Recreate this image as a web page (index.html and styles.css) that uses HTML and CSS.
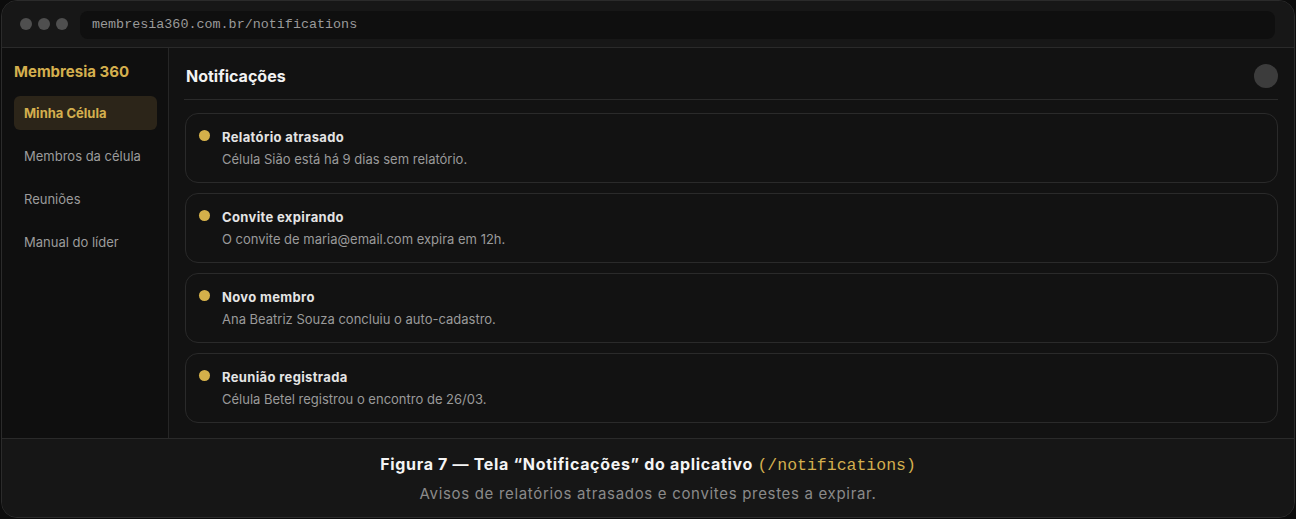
FILE: index.html
```html
<!DOCTYPE html>
<html lang="pt-BR">
<head>
<meta charset="utf-8">
<title>Notificações</title>
<link rel="stylesheet" href="styles.css">
</head>
<body>
<div class="frame">
  <div class="topbar">
    <div class="dots"><span></span><span></span><span></span></div>
    <div class="url">membresia360.com.br/notifications</div>
  </div>
  <div class="app">
    <aside class="sidebar">
      <div class="brand">Membresia 360</div>
      <nav class="nav">
        <div class="nav-item active">Minha Célula</div>
        <div class="nav-item">Membros da célula</div>
        <div class="nav-item">Reuniões</div>
        <div class="nav-item">Manual do líder</div>
      </nav>
    </aside>
    <main class="main">
      <header class="header">
        <h1>Notificações</h1>
        <div class="avatar"></div>
      </header>
      <div class="list">
        <div class="card">
          <span class="dot"></span>
          <div class="card-body">
            <div class="card-title">Relatório atrasado</div>
            <div class="card-desc">Célula Sião está há 9 dias sem relatório.</div>
          </div>
        </div>
        <div class="card">
          <span class="dot"></span>
          <div class="card-body">
            <div class="card-title">Convite expirando</div>
            <div class="card-desc">O convite de maria@email.com expira em 12h.</div>
          </div>
        </div>
        <div class="card">
          <span class="dot"></span>
          <div class="card-body">
            <div class="card-title">Novo membro</div>
            <div class="card-desc">Ana Beatriz Souza concluiu o auto-cadastro.</div>
          </div>
        </div>
        <div class="card">
          <span class="dot"></span>
          <div class="card-body">
            <div class="card-title">Reunião registrada</div>
            <div class="card-desc">Célula Betel registrou o encontro de 26/03.</div>
          </div>
        </div>
      </div>
    </main>
  </div>
  <footer class="caption">
    <div class="caption-title">Figura 7 — Tela “Notificações” do aplicativo <code>(/notifications)</code></div>
    <div class="caption-sub">Avisos de relatórios atrasados e convites prestes a expirar.</div>
  </footer>
</div>
</body>
</html>
```
FILE: styles.css
```css
* { box-sizing: border-box; margin: 0; padding: 0; }
html, body { background: #0c0c0c; }
body {
  font-family: Inter, "Noto Sans", sans-serif;
  width: 1296px;
  height: 519px;
  overflow: hidden;
  padding: 0 1px 1px 1px;
}
.frame {
  width: 1294px;
  height: 518px;
  border: 1px solid #2b2b2b;
  border-radius: 16px;
  background: #161616;
  display: flex;
  flex-direction: column;
  overflow: hidden;
}
.topbar {
  height: 47px;
  flex: none;
  display: flex;
  align-items: center;
  gap: 12px;
  padding: 0 19px 0 18px;
  border-bottom: 1px solid #2a2a2a;
  background: #171717;
}
.dots { display: flex; gap: 6px; }
.dots span {
  width: 12px; height: 12px; border-radius: 50%;
  background: #4f4f4f;
}
.url {
  flex: 1;
  height: 28px;
  margin-top: 1px;
  border-radius: 8px;
  background: #0f0f0f;
  color: #9a9a9a;
  font-family: "Liberation Mono", "DejaVu Sans Mono", monospace;
  font-size: 13.4px;
  line-height: 27px;
  padding-left: 12px;
}
.app {
  flex: none;
  height: 391px;
  display: flex;
  border-bottom: 1px solid #2a2a2a;
}
.sidebar {
  width: 167px;
  flex: none;
  background: #0f0f0f;
  border-right: 1px solid #262626;
  padding: 14px 11px 0 12px;
}
.brand {
  color: #d4af4e;
  font-weight: 700;
  font-size: 15px;
  line-height: 20px;
  margin-bottom: 14px;
}
.nav { display: flex; flex-direction: column; gap: 9px; }
.nav-item {
  height: 34px;
  line-height: 34px;
  padding-left: 10px;
  border-radius: 6px;
  color: #9c9c9c;
  font-size: 13px;
}
.nav-item.active {
  background: #2c2519;
  color: #d4af4e;
  font-weight: 700;
}
.main {
  flex: 1;
  background: #121212;
  padding: 0 16px 0 15px;
  display: flex;
  flex-direction: column;
}
.header {
  height: 52px;
  display: flex;
  align-items: center;
  justify-content: space-between;
  border-bottom: 1px solid #2a2a2a;
  padding: 4px 0 0 2px;
}
.header h1 {
  color: #f2f2f2;
  font-size: 16px;
  font-weight: 700;
}
.avatar {
  width: 24px; height: 24px; border-radius: 50%;
  background: #3c3c3c;
}
.list {
  display: flex;
  flex-direction: column;
  gap: 10px;
  padding: 13px 0 0 1px;
}
.card {
  height: 70px;
  border: 1px solid #2a2a2a;
  border-radius: 13px;
  display: flex;
  align-items: flex-start;
  padding: 15px 16px 0 13px;
  gap: 12px;
}
.dot {
  width: 11px; height: 11px; border-radius: 50%;
  background: #d4b04a;
  flex: none;
  margin-top: 1px;
}
.card-title {
  color: #e4e4e4;
  font-weight: 700;
  font-size: 13px;
  line-height: 16px;
  letter-spacing: 0.35px;
}
.card-desc {
  color: #9a9a9a;
  font-size: 13px;
  line-height: 16px;
  margin-top: 6px;
}
.caption {
  flex: 1;
  background: #161616;
  text-align: center;
  padding-top: 14px;
}
.caption-title {
  color: #f4f4f4;
  font-weight: 700;
  font-size: 16px;
  line-height: 22px;
  letter-spacing: 0.68px;
}
.caption-title code {
  font-family: "Liberation Mono", "DejaVu Sans Mono", monospace;
  font-weight: 400;
  color: #d4af4e;
  font-size: 16.5px;
  letter-spacing: 0;
}
.caption-sub {
  color: #8a8a8a;
  font-size: 15px;
  line-height: 20px;
  letter-spacing: 0.68px;
  margin-top: 7px;
}
```
